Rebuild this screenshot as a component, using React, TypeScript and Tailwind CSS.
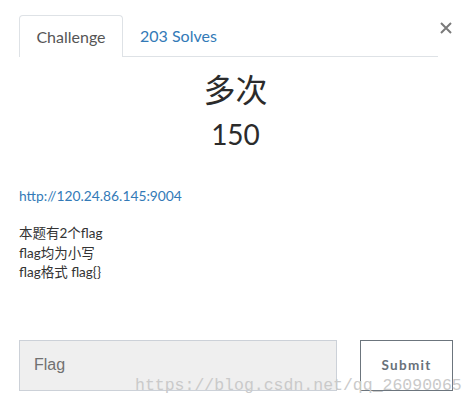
import React from "react";

export default function App() {
  return (
    <div className="relative w-[476px] h-[408px] bg-white overflow-hidden font-['Lato','Noto_Sans_CJK_SC',sans-serif]">
      <div className="pl-[19px] pr-[24px] pt-[15px]">
        <div className="flex items-start">
          <div className="flex-1 flex border-b border-[#dee2e6] h-[42px]">
            <div className="w-[104px] h-[42px] border border-b-0 border-[#dee2e6] rounded-t-[4px] bg-white flex items-center justify-center text-[16px] text-[#555] -mb-px">
              Challenge
            </div>
            <div className="px-[17px] h-[41px] flex items-center text-[16px] text-[#337ab7]">
              203 Solves
            </div>
          </div>
          <button className="w-[13px] ml-px mt-[7px] flex items-center justify-center">
            <svg width="12" height="12" viewBox="0 0 12 12">
              <path d="M1 1L11 11M11 1L1 11" stroke="#7a7a7a" strokeWidth="2" />
            </svg>
          </button>
        </div>

        <div className="flex flex-col items-center pt-[13px]">
          <div className="text-[32px] leading-[40px] text-[#2b2b2b]">多次</div>
          <div className="text-[28px] leading-[36px] text-[#2b2b2b] mt-[6px]">150</div>
        </div>

        <div className="mt-[34px] text-[13.8px] leading-[20px] text-[#337ab7]">
          http://120.24.86.145:9004
        </div>

        <div className="mt-[18px] text-[13.5px] leading-[19.5px] text-[#333]">
          <div>本题有2个flag</div>
          <div>flag均为小写</div>
          <div>flag格式 flag{"{}"}</div>
        </div>

        <div className="flex mt-[57px] justify-between">
          <div className="w-[318px] h-[51px] bg-[#efefef] border border-[#ccd1d8] flex items-center pl-[14px] text-[16px] text-[#717171] font-['Liberation_Sans',sans-serif]">
            Flag
          </div>
          <button className="w-[93px] h-[51px] border border-[#6c757d] flex items-center justify-center text-[13.5px] font-bold tracking-[1.3px] text-[#68717a] mr-[-1px]">
            Submit
          </button>
        </div>
      </div>

      <div className="absolute left-[135px] top-[376px] text-[16.5px] leading-[20px] text-[#cacaca] font-['Liberation_Mono',monospace] whitespace-nowrap pointer-events-none">
        https://blog.csdn.net/qq_26090065
      </div>
    </div>
  );
}
